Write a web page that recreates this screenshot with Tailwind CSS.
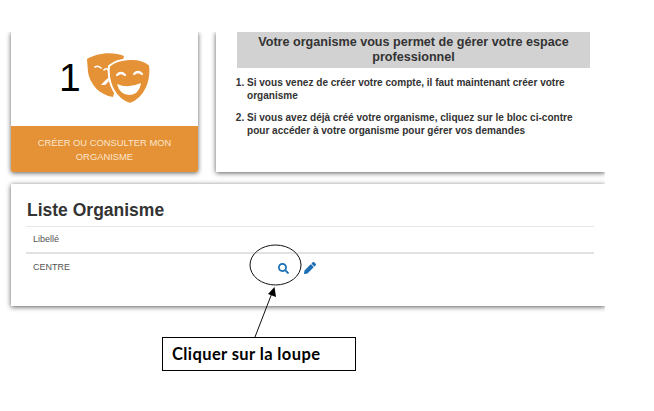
<!DOCTYPE html>
<html lang="fr">
	<head>
		<meta charset="UTF-8" />
		<title>Liste Organisme</title>
		<script src="https://cdn.jsdelivr.net/npm/@tailwindcss/browser@4"></script>
	</head>
	<body class="bg-white">
		<div class="relative w-[654px] h-[411px] overflow-hidden font-['Liberation_Sans',Arial,sans-serif] text-[#333]">
			<main class="w-[605px] pt-[32px] pl-[11px] flex flex-col gap-[12px]">
				<div class="flex gap-[18px]">
					<!-- bloc organisme -->
					<section class="w-[187px] h-[140px] flex flex-col bg-white rounded-b-[2px] shadow-[0_1px_5px_rgba(0,0,0,0.65)] [clip-path:inset(0_-10px_-10px_-10px)]">
						<div class="h-[94px] flex items-center gap-[6px] pl-[48px]">
							<span class="text-[39px] leading-none text-black pb-[4px]">1</span>
							<svg class="w-[64px] h-[52px]" viewBox="87 53 64 52">
								<path fill="#e59135" d="M87 59C96 53 113 51 124 56L113 97C100 95 90 85 88 72Z" />
								<path fill="none" stroke="#fff" stroke-width="1.600" stroke-linecap="round" d="M95 67Q98 65 101 68M104 70Q106 67 109 71" />
								<path fill="#fff" d="M101 85Q106 79 110 77Q110 81 105 85Z" />
								<path fill="#e59135" stroke="#fff" stroke-width="2" d="M109 66C118 58 140 56 150 65C152 80 146 98 130 104C116 100 107 84 109 66Z" />
								<path fill="none" stroke="#fff" stroke-width="2.200" stroke-linecap="round" d="M117 75Q121 71 125 75M134 74Q138 70 142 74" />
								<path fill="#fff" d="M117 84Q128 89 141 83Q139 95 129 95Q120 95 117 84Z" />
							</svg>
						</div>
						<div class="h-[46px] bg-[#e59135] rounded-b-[2px] flex items-center justify-center text-center text-[9.4px] leading-[14px] text-[#fbe6cd] pt-[2px]">
							<p>CRÉER OU CONSULTER MON<br />ORGANISME</p>
						</div>
					</section>
					<!-- bloc explications -->
					<section class="w-[389px] h-[140px] bg-white pl-[21px] pr-[15px] shadow-[0_1px_5px_rgba(0,0,0,0.65)] [clip-path:inset(0_0_-10px_-10px)]">
						<h2 class="h-[36px] bg-[#d2d2d2] flex items-center justify-center text-center font-bold text-[12.6px] leading-[15px]">Votre organisme vous permet de gérer votre espace<br />professionnel</h2>
						<ol class="list-decimal pl-[10px] pt-[8px] text-[10.060px] leading-[13px] font-bold flex flex-col gap-[9px]">
							<li>Si vous venez de créer votre compte, il faut maintenant créer votre organisme</li>
							<li>Si vous avez déjà créé votre organisme, cliquez sur le bloc ci-contre pour accéder à votre organisme pour gérer vos demandes</li>
						</ol>
					</section>
				</div>
				<!-- liste -->
				<section class="w-[594px] h-[122px] bg-white pl-[15px] pr-[11px] shadow-[0_1px_5px_rgba(0,0,0,0.65)] [clip-path:inset(-10px_0_-10px_-10px)]">
					<h1 class="h-[43px] flex items-end pb-[5px] pl-[1px] text-[17.5px] leading-[21px] font-bold border-b border-[#e6e6e6]">Liste Organisme</h1>
					<div class="h-[27px] flex items-center pl-[7px] pt-[1px] text-[9px] text-[#555] border-b-2 border-[#e2e2e2]">Libellé</div>
					<div class="h-[28px] flex items-center pl-[7px] text-[9px] text-[#555]">
						<span class="w-[245px]">CENTRE</span>
						<svg class="w-[11px] h-[11px]" viewBox="0 0 512 512"><path fill="#1b6fb5" d="M505 442.700L405.300 343c-4.500-4.500-10.600-7-17-7H372c27.600-35.300 44-79.700 44-128C416 93.100 322.900 0 208 0S0 93.100 0 208s93.100 208 208 208c48.300 0 92.700-16.400 128-44v16.300c0 6.400 2.500 12.500 7 17l99.700 99.700c9.400 9.400 24.600 9.400 33.900 0l28.300-28.300c9.400-9.400 9.400-24.600.100-34zM208 336c-70.700 0-128-57.200-128-128 0-70.700 57.200-128 128-128 70.700 0 128 57.200 128 128 0 70.700-57.200 128-128 128z" /></svg>
						<svg class="w-[12px] h-[12px] ml-[15px]" viewBox="0 0 512 512"><path fill="#1b6fb5" d="M497.900 142.100l-46.100 46.100c-4.700 4.700-12.300 4.700-17 0l-111-111c-4.700-4.700-4.700-12.300 0-17l46.100-46.100c18.700-18.700 49.100-18.700 67.900 0l60.100 60.100c18.800 18.700 18.800 49.100 0 67.900zM284.200 99.800L21.600 362.400.400 483.900c-2.900 16.400 11.400 30.600 27.800 27.800l121.500-21.300 262.600-262.600c4.700-4.700 4.700-12.300 0-17l-111-111c-4.800-4.700-12.400-4.700-17.100 0z" /></svg>
					</div>
				</section>
			</main>
			<!-- annotation -->
			<svg class="absolute inset-0 w-[654px] h-[411px] pointer-events-none" viewBox="0 0 654 411">
				<ellipse cx="275.500" cy="265" rx="25.500" ry="20" fill="none" stroke="#111" stroke-width="1" />
				<line x1="255" y1="337" x2="272" y2="293" stroke="#111" stroke-width="1" />
				<path fill="#000" d="M274.500 287L276 297L268 294Z" />
			</svg>
			<div class="absolute left-[162px] top-[337px] w-[194px] h-[34px] bg-white border border-black flex items-center pl-[9px] font-['Lato',sans-serif] font-bold text-[16.500px] tracking-[0.400px] text-black">Cliquer sur la loupe</div>
		</div>
	</body>
</html>
